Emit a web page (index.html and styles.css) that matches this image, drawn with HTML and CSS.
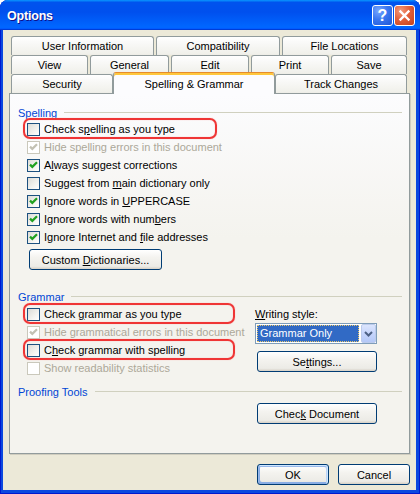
FILE: index.html
```html
<!DOCTYPE html>
<html>
<head>
<meta charset="utf-8">
<title>Options</title>
<link rel="stylesheet" href="styles.css">
</head>
<body>
<div class="window">
  <div class="titlebar">
    <span class="title">Options</span>
    <div class="controls">
      <span class="tbtn help">?</span>
      <span class="tbtn close"><svg width="19" height="19" viewBox="0 0 19 19"><path d="M5.5 5.5 L13.5 13.5 M13.5 5.5 L5.5 13.5" stroke="#fff" stroke-width="2.4" stroke-linecap="square"/></svg></span>
    </div>
  </div>
  <div class="client">
    <div class="tabs">
      <div class="tabrow">
        <div class="tab w-ui">User Information</div>
        <div class="tab w-compat">Compatibility</div>
        <div class="tab w-files">File Locations</div>
      </div>
      <div class="tabrow">
        <div class="tab w-view">View</div>
        <div class="tab w-general">General</div>
        <div class="tab w-edit">Edit</div>
        <div class="tab w-print">Print</div>
        <div class="tab w-save">Save</div>
      </div>
      <div class="tabrow tight">
        <div class="tab w-security">Security</div>
        <div class="tab selected w-spelling">Spelling &amp; Grammar</div>
        <div class="tab w-track">Track Changes</div>
      </div>
    </div>
    <div class="panel">
      <div class="group">Spelling</div>
      <div class="row mark mark-short"><span class="cb"></span><span>Check s<u>p</u>elling as you type</span></div>
      <div class="row disabled"><span class="cb"><svg width="11" height="11" viewBox="0 0 11 11"><polyline points="2,4.6 4.3,6.9 9,2.2" fill="none" stroke="#c3c1b3" stroke-width="2.2"/></svg></span><span>Hide spelling errors in this document</span></div>
      <div class="row"><span class="cb"><svg width="11" height="11" viewBox="0 0 11 11"><polyline points="2,4.6 4.3,6.9 9,2.2" fill="none" stroke="#21a121" stroke-width="2.2"/></svg></span><span>A<u>l</u>ways suggest corrections</span></div>
      <div class="row"><span class="cb"></span><span>Suggest from <u>m</u>ain dictionary only</span></div>
      <div class="row"><span class="cb"><svg width="11" height="11" viewBox="0 0 11 11"><polyline points="2,4.6 4.3,6.9 9,2.2" fill="none" stroke="#21a121" stroke-width="2.2"/></svg></span><span>Ignore words in <u>U</u>PPERCASE</span></div>
      <div class="row"><span class="cb"><svg width="11" height="11" viewBox="0 0 11 11"><polyline points="2,4.6 4.3,6.9 9,2.2" fill="none" stroke="#21a121" stroke-width="2.2"/></svg></span><span>Ignore words with num<u>b</u>ers</span></div>
      <div class="row"><span class="cb"><svg width="11" height="11" viewBox="0 0 11 11"><polyline points="2,4.6 4.3,6.9 9,2.2" fill="none" stroke="#21a121" stroke-width="2.2"/></svg></span><span>Ignore Internet and <u>f</u>ile addresses</span></div>
      <div class="btn btn-dict"><span>Custom <u>D</u>ictionaries...</span></div>

      <div class="group grammar-head">Grammar</div>
      <div class="grammar">
        <div class="gcol">
          <div class="row mark mark-long"><span class="cb"></span><span>Check <u>g</u>rammar as you type</span></div>
          <div class="row disabled"><span class="cb"><svg width="11" height="11" viewBox="0 0 11 11"><polyline points="2,4.6 4.3,6.9 9,2.2" fill="none" stroke="#c3c1b3" stroke-width="2.2"/></svg></span><span>Hide grammatical errors in this document</span></div>
          <div class="row mark mark-long"><span class="cb"></span><span>C<u>h</u>eck grammar with spelling</span></div>
          <div class="row disabled"><span class="cb"></span><span>Show readability statistics</span></div>
        </div>
        <div class="rcol">
          <div class="label"><span><u>W</u>riting style:</span></div>
          <div class="select">
            <span class="sel-text">Grammar Only</span>
            <span class="sel-btn"><svg width="9" height="6" viewBox="0 0 9 6"><polyline points="1,1 4.5,4.5 8,1" fill="none" stroke="#4d6185" stroke-width="2"/></svg></span>
          </div>
          <div class="btn btn-side"><span>Se<u>t</u>tings...</span></div>
        </div>
      </div>

      <div class="group proof-head">Proofing Tools</div>
      <div class="proof">
        <div class="btn btn-side"><span>Chec<u>k</u> Document</span></div>
      </div>
    </div>
    <div class="buttons">
      <div class="btn btn-dlg default"><span>OK</span></div>
      <div class="btn btn-dlg"><span>Cancel</span></div>
    </div>
  </div>
</div>
</body>
</html>
```

FILE: styles.css
```css
html, body {
  margin: 0;
  padding: 0;
  background: #ffffff;
}

body {
  font-family: "Liberation Sans", Tahoma, Arial, sans-serif;
  font-size: 11px;
  color: #000;
}

u {
  text-decoration: underline;
  text-underline-offset: 1px;
}

.window {
  width: 420px;
  height: 494px;
  box-sizing: border-box;
  display: flex;
  flex-direction: column;
  background: #0b48df;
  border-radius: 8px 8px 0 0;
  box-shadow: inset 1px 0 #0019cf, inset -1px 0 #0019cf, inset 0 -1px #0019cf;
  overflow: hidden;
}

/* ---------- title bar ---------- */
.titlebar {
  height: 30px;
  flex: none;
  display: flex;
  align-items: center;
  justify-content: space-between;
  padding: 0 5px 0 7px;
  background: linear-gradient(180deg, #0997ff, #0053ee 8%, #0050ee 40%, #0066ff 88%, #0066ff 93%, #005bff 95%, #003dd7 96%, #003dd7);
}

.title {
  color: #fff;
  font-weight: bold;
  font-size: 12.5px;
  letter-spacing: -0.2px;
  text-shadow: 1px 1px #0f1089;
  padding-top: 1px;
}

.controls {
  display: flex;
  gap: 1px;
  padding-top: 1px;
}

.tbtn {
  width: 21px;
  height: 21px;
  box-sizing: border-box;
  border: 1px solid #fff;
  border-radius: 3px;
  display: flex;
  align-items: center;
  justify-content: center;
}

.help {
  background: radial-gradient(circle at 30% 25%, #7aa8ff 0%, #3b77f0 45%, #1f56d6 100%);
  color: #fff;
  font-weight: bold;
  font-size: 16px;
  font-family: "Liberation Sans", Arial, sans-serif;
  line-height: 19px;
}

.close {
  background: radial-gradient(circle at 30% 25%, #f39a7b 0%, #e2603b 45%, #c4411c 100%);
}

/* ---------- client area ---------- */
.client {
  flex: 1;
  margin: 0 4px 4px 3px;
  background: #ece9d8;
  padding: 6px 6px 5px 6px;
  display: flex;
  flex-direction: column;
}

.tabs {
  margin-left: 2px;
  width: 396px;
}

.tabrow {
  display: flex;
  gap: 2px;
  height: 19px;
}

.tabrow.tight {
  gap: 0;
}

.tab {
  box-sizing: border-box;
  height: 19px;
  border: 1px solid #919b9c;
  border-bottom: none;
  border-radius: 3px 3px 0 0;
  background: linear-gradient(180deg, #fff, #fafaf9 26%, #f0f0ea 95%, #ecebe5);
  text-align: center;
  line-height: 18px;
  white-space: nowrap;
}

.w-ui { width: 143px; }
.w-compat { width: 124px; }
.w-files { width: 125px; }
.w-view { width: 77px; }
.w-general { width: 79px; }
.w-edit { width: 78px; }
.w-print { width: 78px; }
.w-save { width: 76px; }
.w-security { width: 102px; }
.w-spelling { width: 162px; }
.w-track { width: 132px; }

.tab.selected {
  position: relative;
  z-index: 1;
  height: 22px;
  margin-top: -2px;
  border-top: 1px solid #e68b2c;
  box-shadow: inset 0 2px #ffc73c;
  background: #fcfcfe;
  line-height: 20px;
  padding-top: 1px;
}

/* ---------- panel ---------- */
.panel {
  box-sizing: border-box;
  width: 401px;
  height: 361px;
  border: 1px solid #919b9c;
  background: linear-gradient(180deg, #fcfcfe 0%, #f4f3ee 40%, #f4f3ee 100%);
  box-shadow: 1px 1px 0 #d0cdbf;
  padding: 11px 7px 0 8px;
}

.group {
  display: flex;
  align-items: center;
  height: 15px;
  color: #0046d5;
}

.group::after {
  content: "";
  flex: 1;
  height: 1px;
  margin-left: 7px;
  margin-top: -1px;
  background: #d0d0bf;
}

.row {
  display: flex;
  align-items: center;
  height: 18px;
  margin-left: 9px;
  white-space: nowrap;
}

.row.disabled {
  color: #aca899;
}

.cb {
  width: 13px;
  height: 13px;
  box-sizing: border-box;
  border: 1px solid #1c5180;
  background: linear-gradient(135deg, #dcdcd7 0%, #f3f3ef 60%, #ffffff 100%);
  margin-right: 4px;
  flex: none;
  display: flex;
}

.row.disabled .cb {
  border-color: #cac8bb;
  background: #fff;
}

.mark {
  position: relative;
}

.mark::before {
  content: "";
  position: absolute;
  left: -4px;
  top: -2px;
  bottom: -1px;
  border: 2px solid #ef3535;
  border-radius: 7px;
  box-shadow: 0 0 1px #f79a9a, inset 0 0 1px #f79a9a;
}

.mark-short::before { width: 190px; }
.mark-long::before { width: 208px; }

/* ---------- buttons ---------- */
.btn {
  box-sizing: border-box;
  height: 21px;
  border: 1px solid #003c74;
  border-radius: 3px;
  background: linear-gradient(180deg, #ffffff 0%, #f4f3ef 40%, #ecebe6 86%, #d6d0c5 100%);
  display: flex;
  align-items: center;
  justify-content: center;
  white-space: nowrap;
}

.btn-dict {
  width: 133px;
  margin: 3px 0 0 11px;
}

.btn-side {
  width: 120px;
  margin-left: 2px;
}

.btn-dlg {
  width: 72px;
}

.btn.default {
  box-shadow: inset -1px 1px #cee7ff, inset 1px 2px #98b8ea, inset -2px 2px #bcd4f6, inset 1px -1px #89ade4, inset 2px -2px #89ade4;
}

/* ---------- grammar ---------- */
.grammar-head {
  margin-top: 19px;
}

.grammar {
  display: grid;
  grid-template-columns: 237px 122px;
  margin-top: 1px;
}

.label {
  height: 18px;
  display: flex;
  align-items: center;
}

.select {
  box-sizing: border-box;
  height: 21px;
  width: 122px;
  border: 1px solid #7f9db9;
  background: #fff;
  display: flex;
  padding: 1px 0 1px 1px;
  gap: 2px;
}

.sel-text {
  box-sizing: border-box;
  width: 102px;
  height: 17px;
  background: #316ac5;
  color: #fff;
  border: 1px dotted #e8c76c;
  line-height: 15px;
  padding-left: 2px;
}

.sel-btn {
  box-sizing: border-box;
  width: 15px;
  height: 19px;
  margin-top: -1px;
  border: 1px solid #bccbec;
  border-radius: 2px;
  background: linear-gradient(180deg, #dbe5fd 0%, #c6d5fc 50%, #b4c8f7 100%);
  display: flex;
  align-items: center;
  justify-content: center;
}

.rcol .btn-side {
  margin-top: 7px;
}

/* ---------- proofing ---------- */
.proof-head {
  margin-top: 7px;
}

.proof {
  margin-top: 4px;
  padding-left: 237px;
}

/* ---------- dialog buttons ---------- */
.buttons {
  display: flex;
  justify-content: flex-end;
  gap: 9px;
  margin-top: 10px;
  width: 401px;
}
```
